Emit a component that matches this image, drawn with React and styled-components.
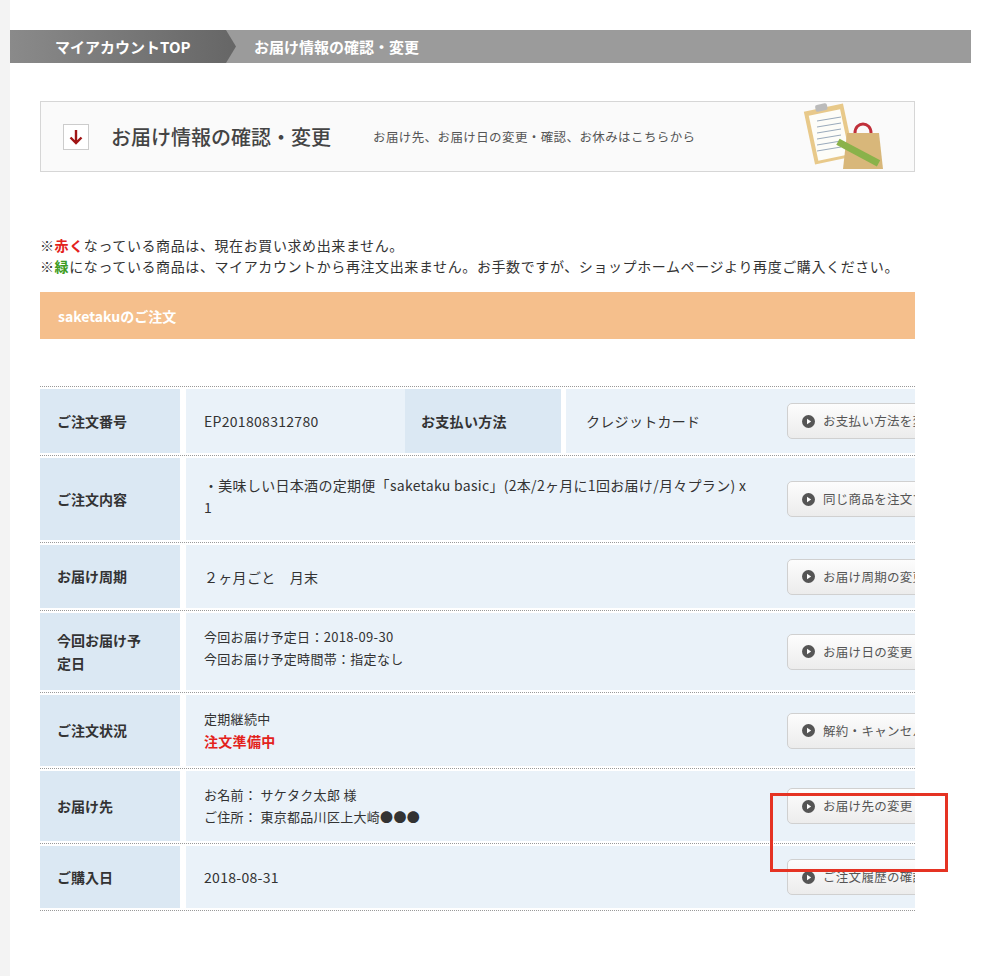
import React from "react";
import styled, { createGlobalStyle } from "styled-components";

const G = createGlobalStyle`
  body{margin:0;background:#fff;font-family:"Noto Sans CJK JP","Noto Sans",sans-serif;color:#333;}
`;
const Page = styled.div`display:flex;min-height:976px;`;
const Strip = styled.div`width:10px;background:#f3f3f3;flex-shrink:0;`;
const Main = styled.div`flex:1;padding-top:30px;position:relative;`;
const Crumbs = styled.div`display:flex;height:33px;width:961px;background:#9b9b9b;color:#fff;font-size:15px;font-weight:bold;`;
const CrumbFirst = styled.div`
  width:226px;padding-left:45px;box-sizing:border-box;display:flex;align-items:center;
  background:linear-gradient(90deg,#8a8a8a,#666);clip-path:polygon(0 0,calc(100% - 10px) 0,100% 50%,calc(100% - 10px) 100%,0 100%);
`;
const Crumb = styled.div`padding-left:18px;display:flex;align-items:center;`;
const Body = styled.div`width:875px;margin-left:30px;`;
const Head = styled.div`
  margin-top:38px;height:71px;box-sizing:border-box;border:1px solid #d6d6d6;background:#fafafa;
  display:flex;align-items:center;padding-left:22px;
`;
const ArrowBox = styled.div`width:24px;height:24px;border:1px solid #ccc;background:#fff;display:flex;align-items:center;justify-content:center;color:#a01414;`;
const HeadTitle = styled.div`font-size:20px;color:#444;margin-left:22px;font-weight:500;`;
const HeadSub = styled.div`font-size:12.5px;color:#555;margin-left:42px;flex:1;letter-spacing:0.4px;`;
const Notes = styled.div`margin-top:63px;font-size:14px;line-height:21px;color:#333;width:860px;letter-spacing:0.6px;`;
const Red = styled.span`color:#e3221c;font-weight:bold;`;
const Green = styled.span`color:#3c9c22;font-weight:bold;`;
const Orange = styled.div`margin-top:15px;height:47px;background:#f5bf8c;color:#fff;font-weight:bold;font-size:14px;display:flex;align-items:center;padding-left:18px;`;
const Table = styled.div`margin-top:47px;border-top:1px dotted #999;overflow:hidden;`;
const Row = styled.div`display:flex;height:${p=>p.h}px;border-bottom:1px dotted #999;padding:2px 0;gap:6px;background:#fff;`;
const Label = styled.div`width:140px;flex-shrink:0;background:#dbe8f3;font-weight:bold;font-size:14px;color:#333;display:flex;align-items:center;padding-left:17px;box-sizing:border-box;line-height:23px;`;
const Cell = styled.div`flex:1;background:#eaf2f9;display:flex;align-items:center;font-size:14px;line-height:22px;padding-left:${p=>p.pl||18}px;min-width:0;letter-spacing:0.3px;`;
const Value = styled.div`flex:1;`;
const InnerLabel = styled.div`width:156px;align-self:stretch;background:#dbe8f3;font-weight:bold;display:flex;align-items:center;padding-left:16px;box-sizing:border-box;`;
const Gap = styled.div`width:5px;align-self:stretch;background:#fff;`;
const Btn = styled.div`
  width:150px;height:36px;flex-shrink:0;margin-left:auto;margin-right:-22px;border:1px solid #d0d0d0;border-radius:5px;
  background:linear-gradient(#fdfdfd,#ececec);display:flex;align-items:center;padding-left:14px;box-sizing:border-box;
  font-size:12.5px;color:#555;white-space:nowrap;gap:8px;overflow:hidden;
`;
const Hl = styled.div`position:absolute;left:760px;top:793px;width:178px;height:79px;border:3px solid #e53323;box-sizing:border-box;`;

const Play = () => (
  <svg width="13" height="13" viewBox="0 0 13 13" style={{ flexShrink: 0 }}><circle cx="6.5" cy="6.5" r="6.5" fill="#555"/><path d="M5 3.8L9.2 6.5 5 9.2z" fill="#fff"/></svg>
);
const B = ({ t }) => <Btn><Play />{t}</Btn>;

const Illus = () => (
  <svg width="95" height="72" viewBox="0 0 95 72" style={{ marginRight: 18 }}>
    <rect x="8" y="6" width="40" height="54" fill="#e8c98a" transform="rotate(-12 28 33)" />
    <rect x="12" y="11" width="32" height="46" fill="#fdfdf8" transform="rotate(-12 28 33)" />
    {[0,1,2,3,4,5].map(i=><line key={i} x1="16" y1={20+i*6} x2="40" y2={16+i*6} stroke="#9ab" strokeWidth="1"/>)}
    <rect x="20" y="2" width="12" height="7" rx="2" fill="#bbb" transform="rotate(-12 28 33)" />
    <path d="M46 32h32l4 36H42z" fill="#d8b77a" />
    <path d="M54 32c0-12 16-12 16 0" stroke="#c0303a" strokeWidth="3" fill="none" />
    <rect x="34" y="48" width="46" height="7" fill="#8ab24a" transform="rotate(28 57 52)" />
  </svg>
);

export default function App() {
  return (
    <>
      <G />
      <Page>
        <Strip />
        <Main>
          <Crumbs>
            <CrumbFirst>マイアカウントTOP</CrumbFirst>
            <Crumb>お届け情報の確認・変更</Crumb>
          </Crumbs>
          <Body>
            <Head>
              <ArrowBox>
                <svg width="14" height="16" viewBox="0 0 14 16"><path d="M7 1v13M1.5 8.5L7 14l5.5-5.5" stroke="#a01414" strokeWidth="2.4" fill="none"/></svg>
              </ArrowBox>
              <HeadTitle>お届け情報の確認・変更</HeadTitle>
              <HeadSub>お届け先、お届け日の変更・確認、お休みはこちらから</HeadSub>
              <Illus />
            </Head>
            <Notes>
              ※<Red>赤く</Red>なっている商品は、現在お買い求め出来ません。<br />
              ※<Green>緑</Green>になっている商品は、マイアカウントから再注文出来ません。お手数ですが、ショップホームページより再度ご購入ください。
            </Notes>
            <Orange>saketakuのご注文</Orange>
            <Table>
              <Row h={64}>
                <Label>ご注文番号</Label>
                <Cell pl={18}>
                  <Value style={{ flex: "0 0 201px" }}>EP201808312780</Value>
                  <InnerLabel>お支払い方法</InnerLabel>
                  <Gap />
                  <Value style={{ paddingLeft: 20 }}>クレジットカード</Value>
                  <B t="お支払い方法を変更" />
                </Cell>
              </Row>
              <Row h={82}>
                <Label>ご注文内容</Label>
                <Cell>
                  <Value style={{ maxWidth: 550, marginTop: -6 }}>・美味しい日本酒の定期便「saketaku basic」(2本/2ヶ月に1回お届け/月々プラン) x 1</Value>
                  <B t="同じ商品を注文する" />
                </Cell>
              </Row>
              <Row h={63}>
                <Label>お届け周期</Label>
                <Cell><Value>２ヶ月ごと　月末</Value><B t="お届け周期の変更" /></Cell>
              </Row>
              <Row h={77}>
                <Label>今回お届け予<br />定日</Label>
                <Cell pl={18}><Value style={{ fontSize: 13, marginTop: -8 }}>今回お届け予定日：2018-09-30<br />今回お届け予定時間帯：指定なし</Value><B t="お届け日の変更" /></Cell>
              </Row>
              <Row h={71}>
                <Label>ご注文状況</Label>
                <Cell><Value style={{ fontSize: 13 }}>定期継続中<br /><Red style={{ fontSize: 14 }}>注文準備中</Red></Value><B t="解約・キャンセル" /></Cell>
              </Row>
              <Row h={70}>
                <Label>お届け先</Label>
                <Cell><Value style={{ fontSize: 13 }}>お名前： サケタク太郎 様<br />ご住所： 東京都品川区上大崎●●●</Value><B t="お届け先の変更" /></Cell>
              </Row>
              <Row h={62}>
                <Label>ご購入日</Label>
                <Cell><Value>2018-08-31</Value><B t="ご注文履歴の確認" /></Cell>
              </Row>
            </Table>
          </Body>
          <Hl />
        </Main>
      </Page>
    </>
  );
}
